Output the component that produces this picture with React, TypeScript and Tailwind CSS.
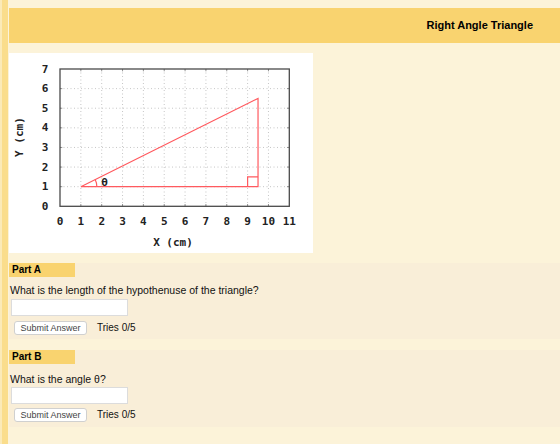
import React from "react";

const xs = (u: number) => 51 + u * (229.3 / 11);
const ys = (v: number) => 153.3 - v * (137.3 / 7);

function Graph() {
  const xt = Array.from({ length: 12 }, (_, i) => i);
  const yt = Array.from({ length: 8 }, (_, i) => i);
  const mono = { fontFamily: '"DejaVu Sans Mono", monospace' };
  const ax = xs(1), ay = ys(1);
  const r = 16;
  const ang = Math.atan2(ys(1) - ys(5.5), xs(9.5) - xs(1));
  return (
    <svg width="304" height="200" viewBox="0 0 304 200" className="block">
      <rect x="0" y="0" width="304" height="200" fill="#ffffff" />
      {xt.slice(1, 11).map((u) => (
        <line key={"gx" + u} x1={xs(u)} y1={16} x2={xs(u)} y2={153.3} stroke="#b8b8b8" strokeWidth="0.8" strokeDasharray="1 2.5" />
      ))}
      {yt.slice(1, 7).map((v) => (
        <line key={"gy" + v} x1={51} y1={ys(v)} x2={280.3} y2={ys(v)} stroke="#b8b8b8" strokeWidth="0.8" strokeDasharray="1 2.5" />
      ))}
      {xt.slice(1, 11).map((u) => (
        <g key={"tx" + u}>
          <line x1={xs(u)} y1={153.3} x2={xs(u)} y2={151} stroke="#777" strokeWidth="0.8" />
          <line x1={xs(u)} y1={16} x2={xs(u)} y2={18.3} stroke="#777" strokeWidth="0.8" />
        </g>
      ))}
      {yt.slice(1, 7).map((v) => (
        <g key={"ty" + v}>
          <line x1={51} y1={ys(v)} x2={53.3} y2={ys(v)} stroke="#777" strokeWidth="0.8" />
          <line x1={280.3} y1={ys(v)} x2={278} y2={ys(v)} stroke="#777" strokeWidth="0.8" />
        </g>
      ))}
      <rect x="51" y="16" width="229.3" height="137.3" fill="none" stroke="#4a4a4a" strokeWidth="1.3" />
      <g fill="none" stroke="#ff5a5f" strokeWidth="1.2">
        <polyline points={`${xs(1)},${ys(1)} ${xs(9.5)},${ys(1)} ${xs(9.5)},${ys(5.5)} ${xs(1)},${ys(1)}`} />
        <polyline points={`${xs(9)},${ys(1)} ${xs(9)},${ys(1.5)} ${xs(9.5)},${ys(1.5)}`} />
        <path d={`M ${ax + r} ${ay} A ${r} ${r} 0 0 0 ${ax + r * Math.cos(ang)} ${ay - r * Math.sin(ang)}`} />
      </g>
      <text x="95.5" y="129.5" textAnchor="middle" dominantBaseline="central" fontSize="11" fontWeight="bold" fill="#222" style={mono}>θ</text>
      {yt.map((v) => (
        <text key={"ly" + v} x="36" y={ys(v)} textAnchor="middle" dominantBaseline="central" fontSize="11" fontWeight="bold" fill="#222" style={mono}>{v}</text>
      ))}
      {xt.map((u) => (
        <text key={"lx" + u} x={xs(u)} y="168" textAnchor="middle" dominantBaseline="central" fontSize="11" fontWeight="bold" fill="#222" style={mono}>{u}</text>
      ))}
      <text x="164" y="189" textAnchor="middle" dominantBaseline="central" fontSize="11" fontWeight="bold" fill="#222" style={mono}>X (cm)</text>
      <text x="10" y="84" textAnchor="middle" dominantBaseline="central" fontSize="11" fontWeight="bold" fill="#222" style={mono} transform="rotate(-90 10 84)">Y (cm)</text>
    </svg>
  );
}

function Part({ label, question, qmt, imt, bmt, pb }: { label: string; question: string; qmt: string; imt: string; bmt: string; pb: string }) {
  return (
    <div className={`bg-[#f9eed8] flex flex-col ${pb}`}>
      <div className="w-[66px] h-[14px] bg-[#f9d36f] pl-[3px] text-[10px] leading-[14px] font-bold text-black">{label}</div>
      <div className={`${qmt} pl-[1px] text-[10.5px] leading-[14px] text-[#111]`}>{question}</div>
      <div className={`${imt} ml-[2px] w-[117px] h-[17px] bg-white border border-[#dcdcdc]`} />
      <div className={`${bmt} flex items-center`}>
        <div className="ml-[5px] w-[73px] h-[14px] bg-white border border-[#d0d0d0] rounded-[3px] text-[9px] leading-[12px] text-[#444] text-center">Submit Answer</div>
        <div className="ml-[10px] text-[10px] leading-[14px] text-[#111]">Tries 0/5</div>
      </div>
    </div>
  );
}

export default function App() {
  return (
    <div className="w-[560px] h-[444px] bg-[#fcf3d9] flex overflow-hidden" style={{ fontFamily: '"Liberation Sans", Arial, sans-serif' }}>
      <div className="w-[2px] bg-[#fbeab8]" />
      <div className="w-[6px] bg-[#fadd8c]" />
      <div className="flex-1 pl-[1px] pt-[8px] flex flex-col">
        <div className="h-[35px] bg-[#f9d36f] flex items-center justify-end pr-[27px]">
          <span className="text-[11px] font-bold text-black">Right Angle Triangle</span>
        </div>
        <div className="mt-[10px] w-[304px] h-[200px]">
          <Graph />
        </div>
        <div className="mt-[10px]">
          <Part label="Part A" question="What is the length of the hypothenuse of the triangle?" qmt="mt-[6px]" imt="mt-[2px]" bmt="mt-[5px]" pb="pb-[4px]" />
        </div>
        <div className="mt-[11px]">
          <Part label="Part B" question="What is the angle θ?" qmt="mt-[8px]" imt="mt-[1px]" bmt="mt-[4px]" pb="pb-[5px]" />
        </div>
      </div>
    </div>
  );
}
